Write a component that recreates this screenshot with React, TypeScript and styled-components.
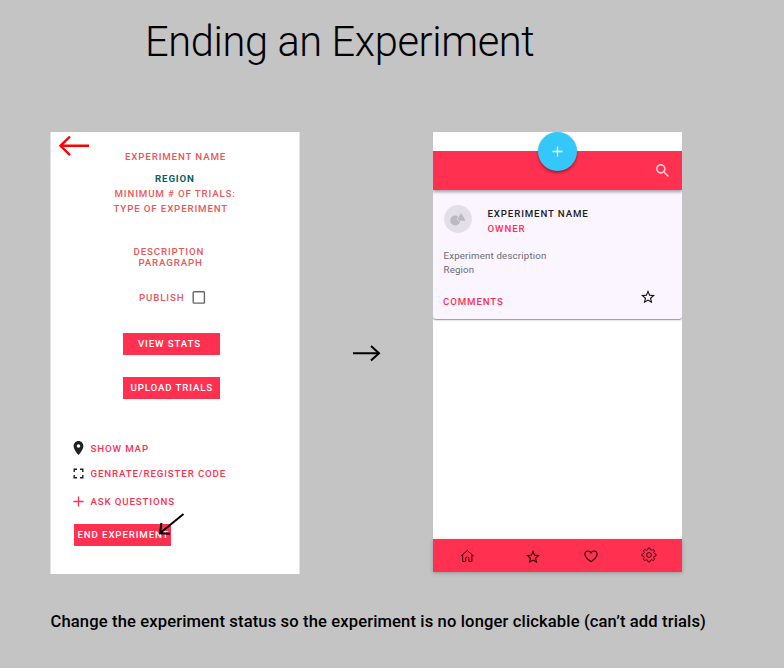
import React from 'react';
import styled, { createGlobalStyle } from 'styled-components';

const GlobalStyle = createGlobalStyle`
  * { box-sizing: border-box; }
  body {
    margin: 0;
    background: #c4c4c4;
    font-family: Roboto, 'Liberation Sans', sans-serif;
  }
`;

const Board = styled.div`
  display: flow-root;
  width: 784px;
  height: 668px;
  overflow: hidden;
  background: #c4c4c4;
`;

const Title = styled.h1`
  margin: 17px 0 0 145px;
  height: 50px;
  font-size: 41.6px;
  line-height: 50px;
  font-weight: 300;
  letter-spacing: -0.38px;
  color: #000;
  white-space: nowrap;
`;

const Flow = styled.main`
  display: grid;
  grid-template-columns: 250px 133px 249px;
  margin: 65px 0 0 50px;
  height: 443px;
`;

const Screen = styled.section`
  display: flex;
  flex-direction: column;
  align-items: flex-start;
  position: relative;
  background: #fff;
`;

const DetailScreen = styled(Screen)`
  height: 442px;
  border: solid #e2e2e2;
  border-width: 0 1px 0 1px;
`;

const ListScreen = styled(Screen)`
  height: 440px;
  padding-top: 19px;
`;

const Line = styled.div<{ $x: number; $top?: number; $color?: string; $bold?: boolean }>`
  margin: ${p => p.$top ?? 0}px 0 0 ${p => p.$x}px;
  height: 11px;
  line-height: 11px;
  font-size: 9.7px;
  font-weight: ${p => (p.$bold ? 700 : 500)};
  letter-spacing: 0.865px;
  color: ${p => p.$color ?? '#e9585b'};
  white-space: nowrap;
`;

const BackArrow = styled.svg`
  display: block;
  flex: none;
  width: 32px;
  height: 22px;
  margin: 3px 0 -6px 7px;
`;

const PublishRow = styled.label`
  display: flex;
  margin: 23px 0 0 88px;
  height: 14px;
`;

const CheckBox = styled.svg`
  display: block;
  width: 14px;
  height: 14px;
  margin: -1px 0 0 7.5px;
`;

const Button = styled.button<{ $x: number; $top: number; $pad: number }>`
  display: block;
  margin: ${p => p.$top}px 0 0 ${p => p.$x}px;
  padding: 0 0 0 ${p => p.$pad}px;
  width: 97px;
  height: 22px;
  flex: none;
  border: 0;
  background: #ff3050;
  color: #fff;
  font: 500 9.7px/22px Roboto, sans-serif;
  letter-spacing: 0.865px;
  text-align: left;
  white-space: nowrap;
`;

const Action = styled.div<{ $top: number }>`
  display: flex;
  align-items: center;
  height: 14px;
  margin: ${p => p.$top}px 0 0 22px;
  gap: 6.5px;
  svg { display: block; flex: none; overflow: visible; }
`;

const Pointer = styled.svg`
  position: absolute;
  left: 105.5px;
  top: 380px;
  width: 30px;
  height: 26px;
`;

const Between = styled.div`
  padding: 212px 0 0 51.5px;
  svg { display: block; }
`;

const AppBar = styled.header`
  display: flex;
  justify-content: flex-end;
  width: 100%;
  height: 39px;
  flex: none;
  padding: 13px 13px 0 0;
  background: #ff3050;
  box-shadow: 0 2px 3px rgba(0, 0, 0, 0.35);
  clip-path: inset(0 0 -6px 0);
  z-index: 1;
`;

const AddButton = styled.button`
  position: absolute;
  left: 105px;
  top: 0;
  z-index: 2;
  display: grid;
  place-items: center;
  width: 39px;
  height: 39px;
  padding: 0;
  border: 0;
  border-radius: 50%;
  background: #33c7fa;
  box-shadow: 0 2px 3px rgba(0, 0, 0, 0.38);
`;

const Card = styled.article`
  width: 100%;
  height: 129px;
  padding: 15px 0 0 10.5px;
  background: #faf5ff;
  border-radius: 0 0 3px 3px;
  box-shadow: 0 1px 1.5px rgba(0, 0, 0, 0.45);
  clip-path: inset(0 0 -4px 0);
`;

const CardHead = styled.div`
  display: flex;
  height: 40px;
`;

const Names = styled.div`
  padding: 3px 0 0 16px;
`;

const Body = styled.p`
  margin: 3.5px 0 0;
  font-size: 9.7px;
  line-height: 14px;
  letter-spacing: 0.17px;
  color: #6d6a72;
`;

const CardFoot = styled.div`
  display: flex;
  justify-content: space-between;
  padding-right: 27px;
  margin-top: 13px;
`;

const NavBar = styled.nav`
  display: flex;
  width: 100%;
  height: 33px;
  margin-top: auto;
  flex: none;
  background: #ff3050;
  box-shadow: 0 1px 4px rgba(0, 0, 0, 0.25);
`;

const NavItem = styled.span<{ $gap: number; $drop: number }>`
  display: block;
  margin: ${p => p.$drop}px 0 0 ${p => p.$gap}px;
  svg { display: block; }
`;

const Caption = styled.p`
  margin: 35.5px 0 0 50.5px;
  height: 22px;
  font-size: 16.6px;
  line-height: 22px;
  font-weight: 500;
  letter-spacing: 0.12px;
  color: #000;
  white-space: nowrap;
`;

const PINK = '#ff3050';

const StarOutline = ({ size, color }: { size: number; color: string }) => (
  <svg width={size} height={size} viewBox="2 2 20 20" fill={color}>
    <path d="M22 9.24l-7.19-.62L12 2 9.19 8.63 2 9.24l5.46 4.73L5.82 21 12 17.27 18.18 21l-1.63-7.03L22 9.24zM12 15.4l-3.76 2.27 1-4.28-3.32-2.88 4.38-.38L12 6.1l1.71 4.04 4.38.38-3.32 2.88 1 4.28L12 15.4z" />
  </svg>
);

// Outline of a cog with eight soft teeth, traced in polar steps.
const gearPath = (() => {
  const pts: string[] = [];
  for (let i = 0; i < 96; i++) {
    const a = (i * 2 * Math.PI) / 96;
    const r = 6.2 + 0.85 * Math.tanh(2.4 * Math.cos(8 * a));
    pts.push(`${(8 + r * Math.sin(a)).toFixed(2)} ${(8 - r * Math.cos(a)).toFixed(2)}`);
  }
  return `M${pts.join('L')}Z`;
})();

export default function App() {
  return (
    <>
      <GlobalStyle />
      <Board>
        <Title>Ending an Experiment</Title>
        <Flow>
          <DetailScreen>
            <BackArrow viewBox="0 0 32 22" fill="none" stroke="#f00" strokeWidth="2.4">
              <path d="M31 10.8H2.5M12 1.5L2.500 10.8l9.5 9.3" />
            </BackArrow>
            <Line $x={74}>EXPERIMENT NAME</Line>
            <Line $x={104} $top={11} $color="#0b5f63" $bold>REGION</Line>
            <Line $x={63.5} $top={4}>MINIMUM # OF TRIALS:</Line>
            <Line $x={62.5} $top={4}>TYPE OF EXPERIMENT</Line>
            <Line $x={82.5} $top={32}>DESCRIPTION</Line>
            <Line $x={87.5}>PARAGRAPH</Line>
            <PublishRow>
              <Line as="span" $x={0} $top={1}>PUBLISH</Line>
              <CheckBox viewBox="0 0 14 14" fill="none" stroke="#666" strokeWidth="1.4">
                <rect x="1.2" y="1.7" width="11.2" height="11.4" rx=".8" />
              </CheckBox>
            </PublishRow>
            <Button $x={72} $top={28} $pad={15}>VIEW STATS</Button>
            <Button $x={72} $top={22} $pad={7.5}>UPLOAD TRIALS</Button>
            <Action $top={42}>
              <svg width="11" height="14" viewBox="5 2 14 20" fill="#212121">
                <path d="M12 2C8.13 2 5 5.13 5 9c0 5.25 7 13 7 13s7-7.75 7-13c0-3.87-3.13-7-7-7zm0 9.5c-1.38 0-2.5-1.12-2.5-2.5s1.12-2.5 2.5-2.5 2.5 1.12 2.5 2.5-1.12 2.5-2.5 2.5z" />
              </svg>
              <Line $x={0} $color={PINK}>SHOW MAP</Line>
            </Action>
            <Action $top={11}>
              <svg width="11" height="11" viewBox="0 0 11 11" fill="none" stroke="#212121" strokeWidth="1.4">
                <path d="M1.2 4V1.2H4M7 1.2h2.8V4M9.8 7v2.8H7M4 9.8H1.2V7" />
              </svg>
              <Line $x={0} $color={PINK}>GENRATE/REGISTER CODE</Line>
            </Action>
            <Action $top={14.5}>
              <svg width="11" height="11" viewBox="0 0 11 11" stroke={PINK} strokeWidth="1.3">
                <path d="M.4 5.5h10.2M5.5.4v10.2" />
              </svg>
              <Line $x={0} $color={PINK}>ASK QUESTIONS</Line>
            </Action>
            <Button $x={23} $top={15.5} $pad={3.5}>END EXPERIMENT</Button>
            <Pointer viewBox="0 0 30 26" fill="none" stroke="#000" strokeWidth="2">
              <path d="M26.5 2L3.5 20.7M4.4 11L3 21.3 13 21.8" />
            </Pointer>
          </DetailScreen>
          <Between>
            <svg width="32" height="18" viewBox="0 0 32 18" fill="none" stroke="#000" strokeWidth="2">
              <path d="M1 9.2h26M19 1.9l8 7.3-8 7.3" />
            </svg>
          </Between>
          <ListScreen>
            <AddButton aria-label="Add">
              <svg width="11" height="11" viewBox="0 0 11 11" stroke="#fff" strokeWidth="1.3">
                <path d="M.5 5.5h10M5.5.5v10" />
              </svg>
            </AddButton>
            <AppBar>
              <svg width="13" height="13" viewBox="3 3 17.5 17.5" fill="#ffd3da">
                <path d="M15.5 14h-.79l-.28-.27C15.41 12.59 16 11.11 16 9.5 16 5.91 13.09 3 9.5 3S3 5.91 3 9.5 5.91 16 9.5 16c1.61 0 3.09-.59 4.23-1.57l.27.28v.79l5 4.99L20.49 19l-4.99-5zm-6 0C7.01 14 5 11.99 5 9.5S7.01 5 9.5 5 14 7.01 14 9.5 11.99 14 9.5 14z" />
              </svg>
            </AppBar>
            <Card>
              <CardHead>
                <svg width="28" height="28" viewBox="0 0 28 28">
                  <circle cx="14" cy="14" r="13.9" fill="#e3dfe9" />
                  <circle cx="11.2" cy="15.5" r="5" fill="#bcb9c2" />
                  <path d="M17 7.4l4.6 8.3h-6.8l-1.5-2z" fill="#bcb9c2" />
                  <path d="M17.2 7l-4.3 7.2 3.2 2.2" fill="none" stroke="#e3dfe9" strokeWidth=".8" />
                </svg>
                <Names>
                  <Line $x={0} $color="#1f1c22">EXPERIMENT NAME</Line>
                  <Line $x={0} $top={4} $color={PINK}>OWNER</Line>
                </Names>
              </CardHead>
              <Body>Experiment description<br />Region</Body>
              <CardFoot>
                <Line $x={-0.5} $top={6.5} $color={PINK}>COMMENTS</Line>
                <StarOutline size={14} color="#111" />
              </CardFoot>
            </Card>
            <NavBar>
              <NavItem $gap={26.5} $drop={10}>
                <svg width="15" height="14" viewBox="0 0 15 14" fill="none" stroke="#33090f" strokeWidth="1">
                  <path d="M.8 7.2L7.3 1.5l6.5 5.7M2.7 6v6.5h3V8.7q1.6-1.5 3.2 0v3.8h3V6" />
                </svg>
              </NavItem>
              <NavItem $gap={51} $drop={11}><StarOutline size={14} color="#33090f" /></NavItem>
              <NavItem $gap={44.5} $drop={10.5}>
                <svg width="14" height="13" viewBox="0 0 14 13" fill="none" stroke="#33090f" strokeWidth="1.2">
                  <path d="M7 11.8C3 8.8.9 6.8.9 4.2.9 2.4 2.2 1 4 1c1.3 0 2.4.7 3 1.9C7.6 1.7 8.7 1 10 1c1.8 0 3.1 1.4 3.1 3.2 0 2.6-2.1 4.6-6.1 7.6z" />
                </svg>
              </NavItem>
              <NavItem $gap={43} $drop={8}>
                <svg width="16" height="16" viewBox="0 0 16 16" fill="none" stroke="#33090f" strokeWidth="1" strokeLinejoin="round">
                  <path d={gearPath} />
                  <circle cx="8" cy="8" r="2.4" />
                </svg>
              </NavItem>
            </NavBar>
          </ListScreen>
        </Flow>
        <Caption>Change the experiment status so the experiment is no longer clickable (can’t add trials)</Caption>
      </Board>
    </>
  );
}
